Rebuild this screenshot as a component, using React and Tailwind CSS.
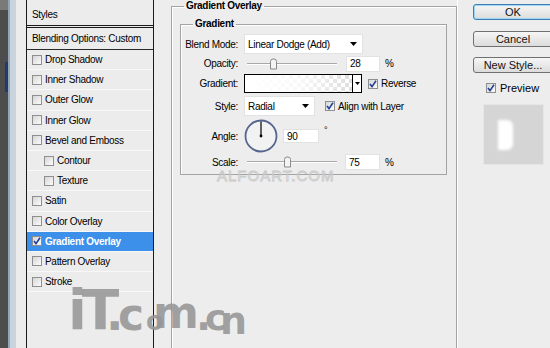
import React from 'react';

const styleRows = [
    { label: 'Drop Shadow' },
    { label: 'Inner Shadow' },
    { label: 'Outer Glow' },
    { label: 'Inner Glow' },
    { label: 'Bevel and Emboss' },
    { label: 'Contour', indent: true },
    { label: 'Texture', indent: true },
    { label: 'Satin' },
    { label: 'Color Overlay' },
    { label: 'Gradient Overlay', active: true },
    { label: 'Pattern Overlay' },
    { label: 'Stroke' },
];

function CheckBox({ checked }) {
    return (
        <span className="flex h-[10px] w-[10px] shrink-0 items-center justify-center border border-[#8f8f8f] bg-gradient-to-br from-[#d6d6d6] to-[#fcfcfc]">
            {checked && (
                <svg width="8" height="8" viewBox="0 0 8 8">
                    <path
                        d="M1 4 L3 6.6 L7 0.8"
                        fill="none"
                        stroke="#22419a"
                        strokeWidth="1.6"
                    />
                </svg>
            )}
        </span>
    );
}

function Slider({ pos }) {
    return (
        <div className="relative ml-[8px] h-full w-[90px]">
            <div className="absolute left-0 right-0 top-1/2 h-[2px] -translate-y-1/2 border-t border-[#a8a8a8] bg-white" />
            <div
                className="absolute top-1/2 h-[11px] w-[7px] -translate-y-1/2 rounded-t-[3px] border border-[#8a8a8a] bg-[#f4f4f4]"
                style={{ left: pos }}
            />
        </div>
    );
}

function Label({ children }) {
    return <span className="w-[58px] shrink-0 pr-[1px] text-right">{children}</span>;
}

function Arrow() {
    return (
        <svg width="7" height="4" viewBox="0 0 7 4">
            <path d="M0 0 H7 L3.5 4 Z" fill="#000" />
        </svg>
    );
}

function Button({ children, focus, className }) {
    return (
        <div
            className={`flex h-[16px] w-[80px] items-center justify-center rounded-[3px] border bg-gradient-to-b from-[#f6f6f6] to-[#dcdcdc] text-[11px] text-[#111] ${
                focus
                    ? 'border-[#3c7fb1] shadow-[inset_0_0_0_1px_#9fd5f4]'
                    : 'border-[#707070]'
            } ${className}`}
        >
            {children}
        </div>
    );
}

export default function App() {
    return (
        <div className="relative flex h-[348px] w-[550px] overflow-hidden bg-[#ededed] font-['Liberation_Sans',Arial,sans-serif] text-[10px] tracking-[-0.3px] text-black">
            {/* window edge on the left */}
            <div className="flex h-full shrink-0">
                <div className="flex w-[8px] flex-col bg-[#4d4d4d]">
                    <div className="h-[10px] bg-[#7a7a7a]" />
                    <div className="mt-[52px] ml-[5px] h-[30px] w-[3px] bg-[#1e3c6e]" />
                </div>
                <div className="w-[2px] bg-[#95a6b6]" />
                <div className="w-[6px] bg-[#c8d3de]" />
                <div className="w-[10px] bg-[#ececec]" />
            </div>

            {/* styles list */}
            <div className="flex h-full w-[128px] shrink-0 flex-col border-x border-[#1a1a1a] bg-[#ececec]">
                <div className="flex h-[28px] items-center border-b-[3px] border-double border-[#1a1a1a] pl-[5px] pt-[3px]">
                    Styles
                </div>
                <div className="flex h-[22px] items-center border-b border-[#2a2a2a] pl-[5px]">
                    Blending Options: Custom
                </div>
                {styleRows.map((row) => (
                    <div
                        key={row.label}
                        className={`flex h-[20.2px] items-center gap-[3px] border-b border-[#f8f8f8] ${
                            row.indent ? 'pl-[17px]' : 'pl-[5px]'
                        } ${row.active ? 'bg-[#3d90ea] font-bold text-white' : ''}`}
                    >
                        <CheckBox checked={row.active} />
                        <span>{row.label}</span>
                    </div>
                ))}
            </div>

            {/* gradient overlay panel */}
            <fieldset className="ml-[17px] h-[370px] w-[286px] shrink-0 border border-[#a3a3a3] shadow-[inset_1px_1px_0_#fff]">
                <legend className="ml-[12px] px-[2px] text-[10px] font-bold leading-[12px]">
                    Gradient Overlay
                </legend>
                <fieldset className="ml-[8px] mr-[9px] mt-[6px] border border-[#a3a3a3] pb-[4px] shadow-[inset_1px_1px_0_#fff]">
                    <legend className="ml-[12px] px-[2px] text-[10px] font-bold leading-[12px]">
                        Gradient
                    </legend>
                    <div className="flex flex-col pt-[4px]">
                        <div className="flex h-[20px] items-center gap-[5px]">
                            <Label>Blend Mode:</Label>
                            <div className="flex h-[20px] w-[119px] items-center justify-between bg-white pl-[4px] pr-[6px] shadow-[inset_0_0_0_1px_#e2e2e2]">
                                <span>Linear Dodge (Add)</span>
                                <Arrow />
                            </div>
                        </div>
                        <div className="flex h-[19px] items-center">
                            <Label>Opacity:</Label>
                            <Slider pos={23} />
                            <div className="ml-[9px] flex h-[16px] w-[34px] items-center bg-white pl-[4px] shadow-[inset_0_0_0_1px_#e2e2e2]">
                                28
                            </div>
                            <span className="ml-[5px]">%</span>
                        </div>
                        <div className="mt-[1px] flex h-[19px] items-center">
                            <Label>Gradient:</Label>
                            <div className="ml-[5px] flex h-[19px] border border-black">
                                <div className="h-full w-[107px] bg-[repeating-conic-gradient(#dedede_0_25%,#ffffff_0_50%)] bg-[length:8px_8px]">
                                    <div className="h-full w-full bg-gradient-to-r from-white via-white/80 to-white/0" />
                                </div>
                                <div className="flex w-[9px] items-center justify-center border-l border-black bg-white">
                                    <svg width="5" height="3" viewBox="0 0 5 3">
                                        <path d="M0 0 H5 L2.5 3 Z" fill="#000" />
                                    </svg>
                                </div>
                            </div>
                            <span className="ml-[6px]">
                                <CheckBox checked />
                            </span>
                            <span className="ml-[3px]">Reverse</span>
                        </div>
                        <div className="mt-[3px] flex h-[20px] items-center gap-[5px]">
                            <Label>Style:</Label>
                            <div className="flex h-[20px] w-[71px] items-center justify-between bg-white pl-[4px] pr-[6px] shadow-[inset_0_0_0_1px_#e2e2e2]">
                                <span>Radial</span>
                                <Arrow />
                            </div>
                            <span className="ml-[5px]">
                                <CheckBox checked />
                            </span>
                            <span className="-ml-[2px]">Align with Layer</span>
                        </div>
                        <div className="mt-[3px] flex h-[34px] items-center">
                            <Label>Angle:</Label>
                            <svg className="ml-[5px]" width="34" height="34" viewBox="0 0 34 34">
                                <circle cx="17" cy="17" r="15.5" fill="#f2f2f2" stroke="#56658e" strokeWidth="1.8" />
                                <line x1="17" y1="17" x2="17" y2="2.5" stroke="#000" strokeWidth="1.2" />
                                <circle cx="17" cy="17" r="1.4" fill="#000" />
                            </svg>
                            <div className="ml-[5px] flex h-[14px] w-[36px] items-center bg-white pl-[4px] shadow-[inset_0_0_0_1px_#e2e2e2]">
                                90
                            </div>
                            <span className="mb-[10px] ml-[5px] text-[9px]">°</span>
                        </div>
                        <div className="mt-[1px] flex h-[16px] items-center">
                            <Label>Scale:</Label>
                            <Slider pos={37} />
                            <div className="ml-[8px] flex h-[16px] w-[35px] items-center bg-white pl-[4px] shadow-[inset_0_0_0_1px_#e2e2e2]">
                                75
                            </div>
                            <span className="ml-[5px]">%</span>
                        </div>
                    </div>
                </fieldset>
            </fieldset>

            {/* buttons and preview */}
            <div className="flex w-[93px] shrink-0 flex-col border-l border-white pl-[15px] tracking-normal">
                <Button focus className="mt-[4px]">OK</Button>
                <Button className="mt-[11px]">Cancel</Button>
                <Button className="mt-[10px]">New Style...</Button>
                <div className="ml-[13px] mt-[7px] flex items-center gap-[4px] text-[11px]">
                    <CheckBox checked />
                    <span>Preview</span>
                </div>
                <div className="ml-[10px] mt-[7px] flex h-[61px] w-[61px] items-start border border-[#e6e6e6] bg-[#d5d5d5] pl-[14px] pt-[15px]">
                    <div className="h-[30px] w-[15px] rounded-r-[6px] bg-white blur-[1.5px]" />
                </div>
            </div>

            {/* watermarks */}
            <span className="absolute left-[217px] top-[165px] text-[15px] tracking-[1px] text-transparent [-webkit-text-stroke:0.8px_#c8c8c8]">
                ALFOART.COM
            </span>
            <div className="pointer-events-none absolute left-0 top-0 h-full w-full font-['DejaVu_Sans',sans-serif] font-bold leading-none tracking-normal text-[rgba(150,150,150,0.88)]">
                <span className="absolute left-[68px] top-[283px] text-[55px] tracking-[-5px]">iT</span>
                <span className="absolute left-[106px] top-[291px] text-[46px]">.</span>
                <span className="absolute left-[118px] top-[293px] text-[44px]">c</span>
                <span className="absolute left-[146px] top-[308px] text-[26px]">o</span>
                <span className="absolute left-[153px] top-[291px] text-[44px] tracking-[-2px]">m</span>
                <span className="absolute left-[196px] top-[296px] text-[40px]">.</span>
                <span className="absolute left-[205px] top-[300px] text-[36px]">c</span>
                <span className="absolute left-[220px] top-[302px] text-[38px]">n</span>
            </div>
        </div>
    );
}
